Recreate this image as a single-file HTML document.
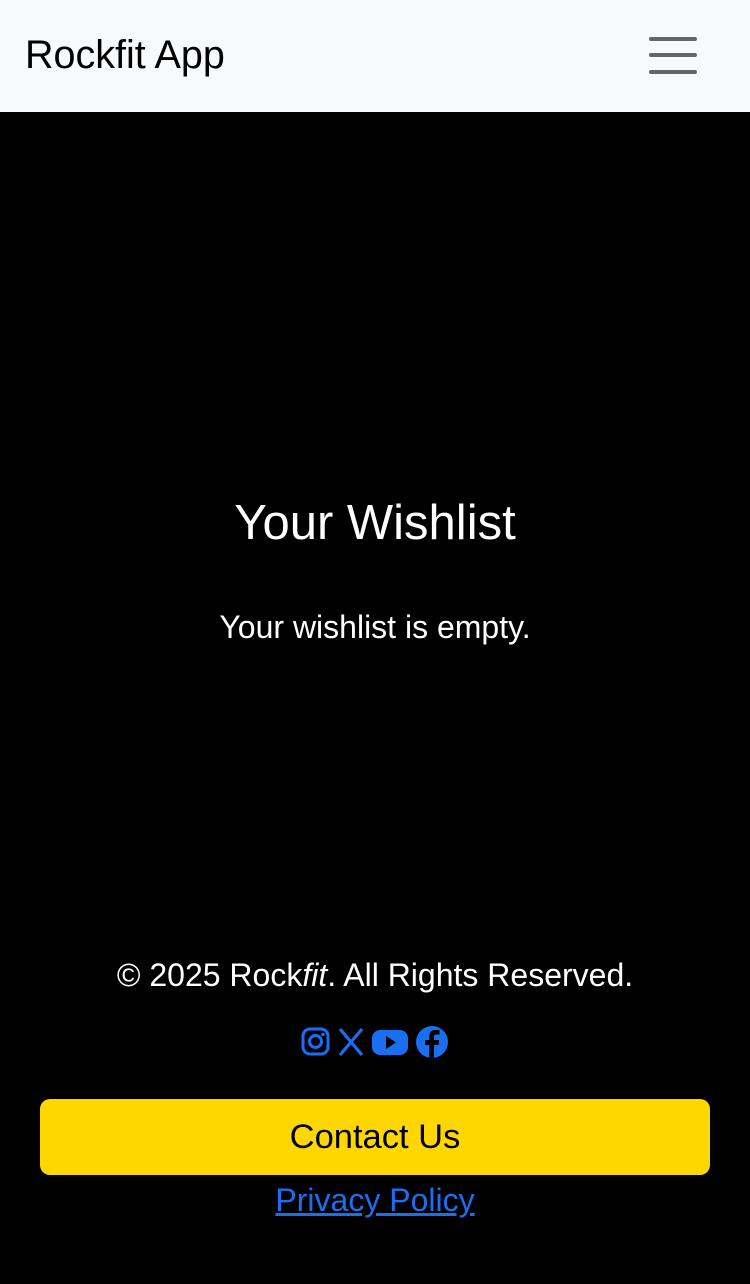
<!DOCTYPE html>
<html><head><meta charset="utf-8"><style>
*{margin:0;padding:0;box-sizing:border-box}
body{width:750px;height:1284px;background:#000;font-family:"Liberation Sans",sans-serif;color:#fff;position:relative;overflow:hidden}
.hdr{position:absolute;top:0;left:0;width:750px;height:112px;background:#f8f9fa}
.brand{position:absolute;left:25px;top:33px;font-size:39.5px;color:#000;line-height:44px}
.bar{position:absolute;left:649px;width:48px;height:3.5px;border-radius:2px;background:#666}
.t{position:absolute;left:0;width:750px;text-align:center}
.btn{position:absolute;left:40px;top:1099px;width:670px;height:76px;background:#ffd700;border-radius:10px;color:#000;font-size:34.5px;text-align:center;line-height:76px}
a{color:#1a6ef0;text-decoration:underline}
</style></head><body>
<div class="hdr"><div class="brand">Rockfit App</div>
<div class="bar" style="top:37px"></div><div class="bar" style="top:53px"></div><div class="bar" style="top:70px"></div></div>
<div class="t" style="top:495px;font-size:49px;line-height:56px">Your Wishlist</div>
<div class="t" style="top:608px;font-size:32px;line-height:38px">Your wishlist is empty.</div>
<div class="t" style="top:956px;font-size:32px;line-height:38px">© 2025 Rock<i>fit</i>. All Rights Reserved.</div>
<svg style="position:absolute;left:300px;top:1025px" width="150" height="34" viewBox="0 0 150 34">
<g fill="none" stroke="#1a6ef0" stroke-width="3"><rect x="3" y="4" width="25" height="25" rx="7"/><circle cx="15.5" cy="16.5" r="6"/></g>
<circle cx="23" cy="9.5" r="1.8" fill="#1a6ef0"/>
<path d="M40 4 L62 30 M62 4 L40 30" stroke="#1a6ef0" stroke-width="3.2"/>
<rect x="72" y="5" width="36" height="25" rx="8" fill="#1a6ef0"/><path d="M86 11 L96 17.5 L86 24Z" fill="#000"/>
<circle cx="132" cy="17" r="16" fill="#1a6ef0"/><path d="M134 33 V20 h4.5 l.7-5 H134 v-3 c0-1.6.6-2.5 2.6-2.5 H139.5 V5.2 c-1-.1-2.3-.3-3.8-.3 -4 0-6.4 2.3-6.4 6.6 V15 h-4.3 v5 h4.3 v13z" fill="#000"/>
</svg>
<div class="btn">Contact Us</div>
<div class="t" style="top:1181px;font-size:32px;line-height:38px"><a>Privacy Policy</a></div>
</body></html>
